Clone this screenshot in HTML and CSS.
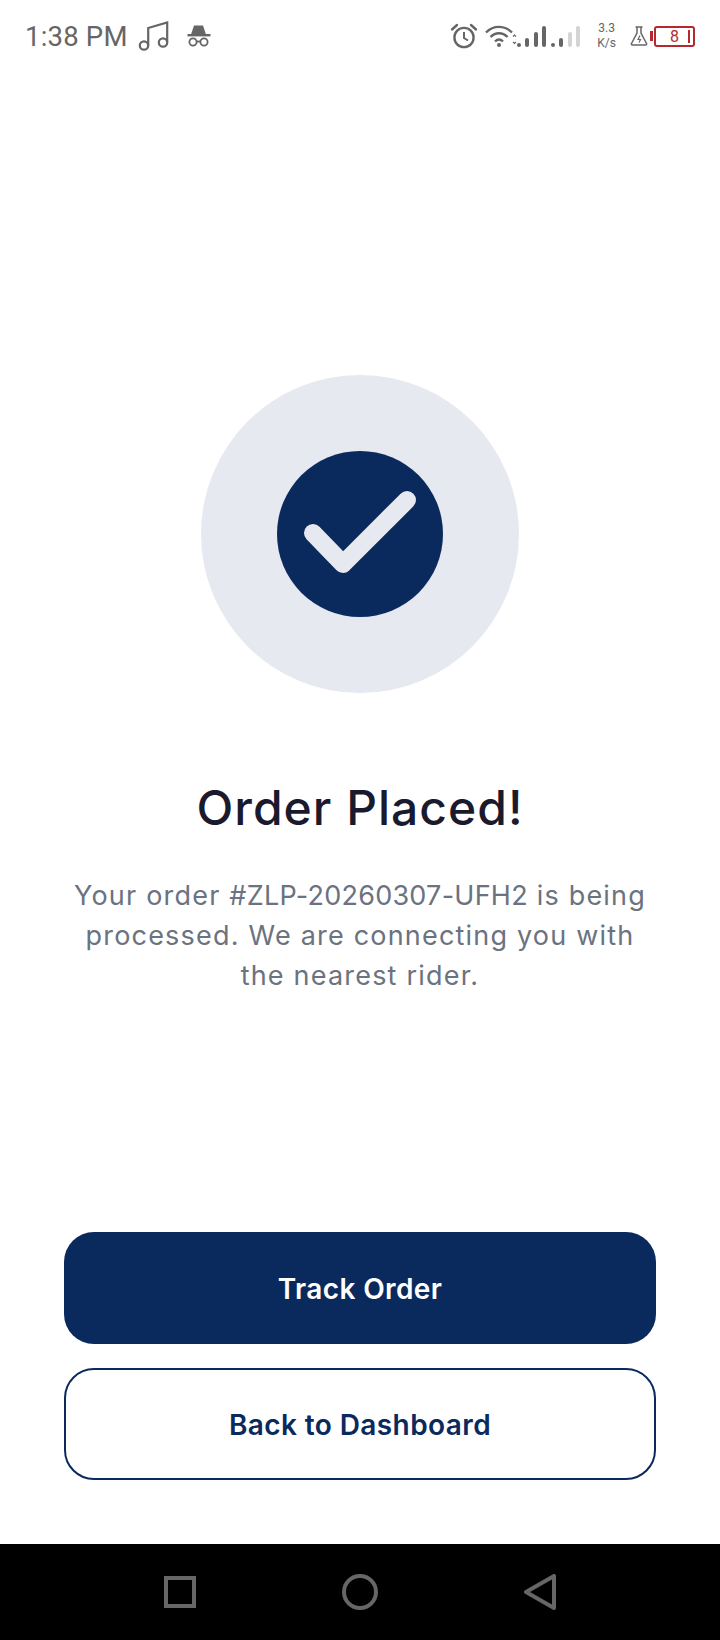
FILE: index.html
```html
<!DOCTYPE html>
<html lang="en">
<head>
<meta charset="UTF-8" />
<meta name="viewport" content="width=device-width, initial-scale=1" />
<title>Order Placed</title>
<link rel="stylesheet" href="styles.css">
</head>
<body>
  <div class="phone">
    <header class="status-bar">
      <div class="status-left">
        <span class="time">1:38 PM</span>
        <svg class="icon-music" width="32" height="32" viewBox="0 0 32 32" fill="none" stroke="#666" stroke-width="2.2">
          <circle cx="6" cy="25.500" r="4.200" />
          <circle cx="25" cy="22.500" r="4.200" />
          <path d="M10.200 25.500V8L29.200 2.500V22.500" />
        </svg>
        <svg class="icon-spy" width="24" height="22" viewBox="0 0 24 22" fill="#666">
          <path d="M7 0.500h9l3 9H4z" />
          <rect x="0.500" y="9" width="23" height="2.400" />
          <g fill="none" stroke="#666" stroke-width="1.800">
            <circle cx="6" cy="17" r="3.600" />
            <circle cx="17" cy="17" r="3.600" />
            <path d="M9.500 16.500h4" />
          </g>
        </svg>
      </div>
      <div class="status-right">
        <svg class="icon-alarm" width="28" height="26" viewBox="0 0 28 26" fill="none" stroke="#666" stroke-width="2.4">
          <circle cx="14" cy="14.500" r="9.600" />
          <path d="M14 9v6l4 2.500" stroke-width="2" />
          <path d="M2 6.500L7 2M26 6.500L21 2" stroke-linecap="round" />
        </svg>
        <svg class="icon-wifi" width="32" height="24" viewBox="0 0 32 24" fill="none" stroke="#666" stroke-width="2.4">
          <path d="M1 8.500C8.500 1 19.500 1 27 8.500" />
          <path d="M5.500 13C10.500 8 17.500 8 22.500 13" />
          <path d="M10 17.500c2.500-2.500 5.500-2.500 8 0" />
          <circle cx="14" cy="21" r="2" fill="#666" stroke="none" />
          <path d="M28 12.500l1.500-1.500 1.500 1.500M28 18l1.500 1.500L31 18" stroke-width="1.200" />
        </svg>
        <svg class="icon-signal" width="64" height="24" viewBox="0 0 64 24" fill="#666">
          <rect x="0" y="19" width="4" height="4" rx="2" />
          <rect x="8" y="14" width="4" height="9" rx="2" />
          <rect x="17" y="8" width="4" height="15" rx="2" />
          <rect x="25" y="2" width="4" height="21" rx="2" />
          <rect x="34" y="19" width="4" height="4" rx="2" />
          <rect x="42" y="14" width="4" height="9" rx="2" />
          <rect x="51" y="8" width="4" height="15" rx="2" fill="#d4d4d4" />
          <rect x="59" y="2" width="4" height="21" rx="2" fill="#d4d4d4" />
        </svg>
        <div class="speed"><span>3.3</span><span>K/s</span></div>
        <svg class="icon-flask" width="18" height="20" viewBox="0 0 18 20" fill="none" stroke="#666" stroke-width="1.500">
          <path d="M5.500 1h7M7 1v6L1.500 17.500a1 1 0 0 0 1 1.500h13a1 1 0 0 0 1-1.500L11 7V1" />
          <path d="M10 9.500l-2 4h2.500l-1.500 3" stroke-width="1.200" />
        </svg>
        <div class="battery">
          <span class="battery-nub"></span>
          <div class="battery-body">
            <span class="battery-num">8</span>
            <span class="battery-level"></span>
          </div>
        </div>
      </div>
    </header>

    <main class="content">
      <div class="check-ring">
        <div class="check-disc">
          <svg width="166" height="166" viewBox="0 0 166 166" fill="none" stroke="#e6e9ef" stroke-width="18" stroke-linecap="round" stroke-linejoin="round">
            <path d="M36 82L66 113L130 49" />
          </svg>
        </div>
      </div>
      <h1 class="title">Order Placed!</h1>
      <p class="message">Your order <span class="order-id">#ZLP-20260307-UFH2</span> is being<br>processed. We are connecting you with<br>the nearest rider.</p>
      <div class="actions">
        <button class="btn btn-primary">Track Order</button>
        <button class="btn btn-outline">Back to Dashboard</button>
      </div>
    </main>

    <nav class="nav-bar">
      <svg width="36" height="36" viewBox="0 0 36 36" fill="none" stroke="#666" stroke-width="4">
        <rect x="4" y="4" width="28" height="28" />
      </svg>
      <svg width="36" height="36" viewBox="0 0 36 36" fill="none" stroke="#666" stroke-width="4">
        <circle cx="18" cy="18" r="16" />
      </svg>
      <svg width="36" height="36" viewBox="0 0 36 36" fill="none" stroke="#666" stroke-width="4" stroke-linejoin="round">
        <path d="M32 2V34L4 18Z" />
      </svg>
    </nav>
  </div>
</body>
</html>
```

FILE: styles.css
```css
/* Reset & base */
* {
  box-sizing: border-box;
}
body {
  margin: 0;
  background: #fff;
  font-family: 'Inter', 'Noto Sans', sans-serif;
}
.phone {
  display: flex;
  flex-direction: column;
  width: 720px;
  height: 1640px;
}

/* Status bar */
.status-bar {
  display: flex;
  justify-content: space-between;
  align-items: center;
  height: 72px;
  padding: 0 25px;
  color: #666;
}
.status-left,
.status-right {
  display: flex;
  align-items: center;
}
.time {
  font-family: 'Roboto', sans-serif;
  font-size: 27.5px;
  font-weight: 450;
  letter-spacing: 0.2px;
}
.icon-music {
  margin-left: 10px;
}
.icon-spy {
  margin-left: 17px;
}
.icon-wifi {
  margin-left: 7px;
}
.speed {
  display: flex;
  flex-direction: column;
  align-items: center;
  margin-left: 16px;
  font-family: 'Roboto', sans-serif;
  font-size: 12px;
  line-height: 15px;
}
.icon-flask {
  margin-left: 14px;
}
.battery {
  display: flex;
  align-items: center;
  margin-left: 2px;
}
.battery-nub {
  width: 3px;
  height: 10px;
  background: #b5292e;
}
.battery-body {
  display: flex;
  justify-content: flex-end;
  align-items: center;
  gap: 9px;
  width: 41px;
  height: 21px;
  margin-left: 1px;
  padding-right: 3px;
  border: 2px solid #b5292e;
  border-radius: 3px;
}
.battery-num {
  font-family: 'Roboto', sans-serif;
  font-size: 16px;
  color: #b5292e;
}
.battery-level {
  width: 2px;
  height: 13px;
  background: #b5292e;
}

/* Main */
.content {
  flex: 1;
  display: flex;
  flex-direction: column;
  align-items: center;
  padding: 303px 64px 64px;
  text-align: center;
}
.check-ring {
  display: flex;
  justify-content: center;
  align-items: center;
  width: 318px;
  height: 318px;
  border-radius: 50%;
  background: #e6e9ef;
}
.check-disc {
  width: 166px;
  height: 166px;
  border-radius: 50%;
  background: #0a2a5e;
}
.check-disc svg {
  display: block;
}
.title {
  margin: 85px 0 38px;
  font-size: 48px;
  font-weight: 520;
  line-height: 60px;
  letter-spacing: 1px;
  color: #1a1a2e;
}
.message {
  margin: 0;
  font-size: 27px;
  line-height: 40px;
  letter-spacing: 1.2px;
  color: #6b7280;
  white-space: nowrap;
}
.order-id {
  letter-spacing: 0.25px;
}
.actions {
  display: flex;
  flex-direction: column;
  gap: 24px;
  width: 100%;
  margin-top: auto;
}
.btn {
  height: 112px;
  padding-top: 3px;
  font-family: inherit;
  font-size: 28px;
  font-weight: 600;
  letter-spacing: 0.4px;
  border-radius: 30px;
  cursor: pointer;
}
.btn-primary {
  background: #0a2a5e;
  border: none;
  color: #fff;
}
.btn-outline {
  background: #fff;
  border: 2px solid #0a2a5e;
  color: #0a2a5e;
}

/* Android nav */
.nav-bar {
  display: flex;
  justify-content: center;
  align-items: center;
  gap: 144px;
  height: 96px;
  background: #000;
}
```
